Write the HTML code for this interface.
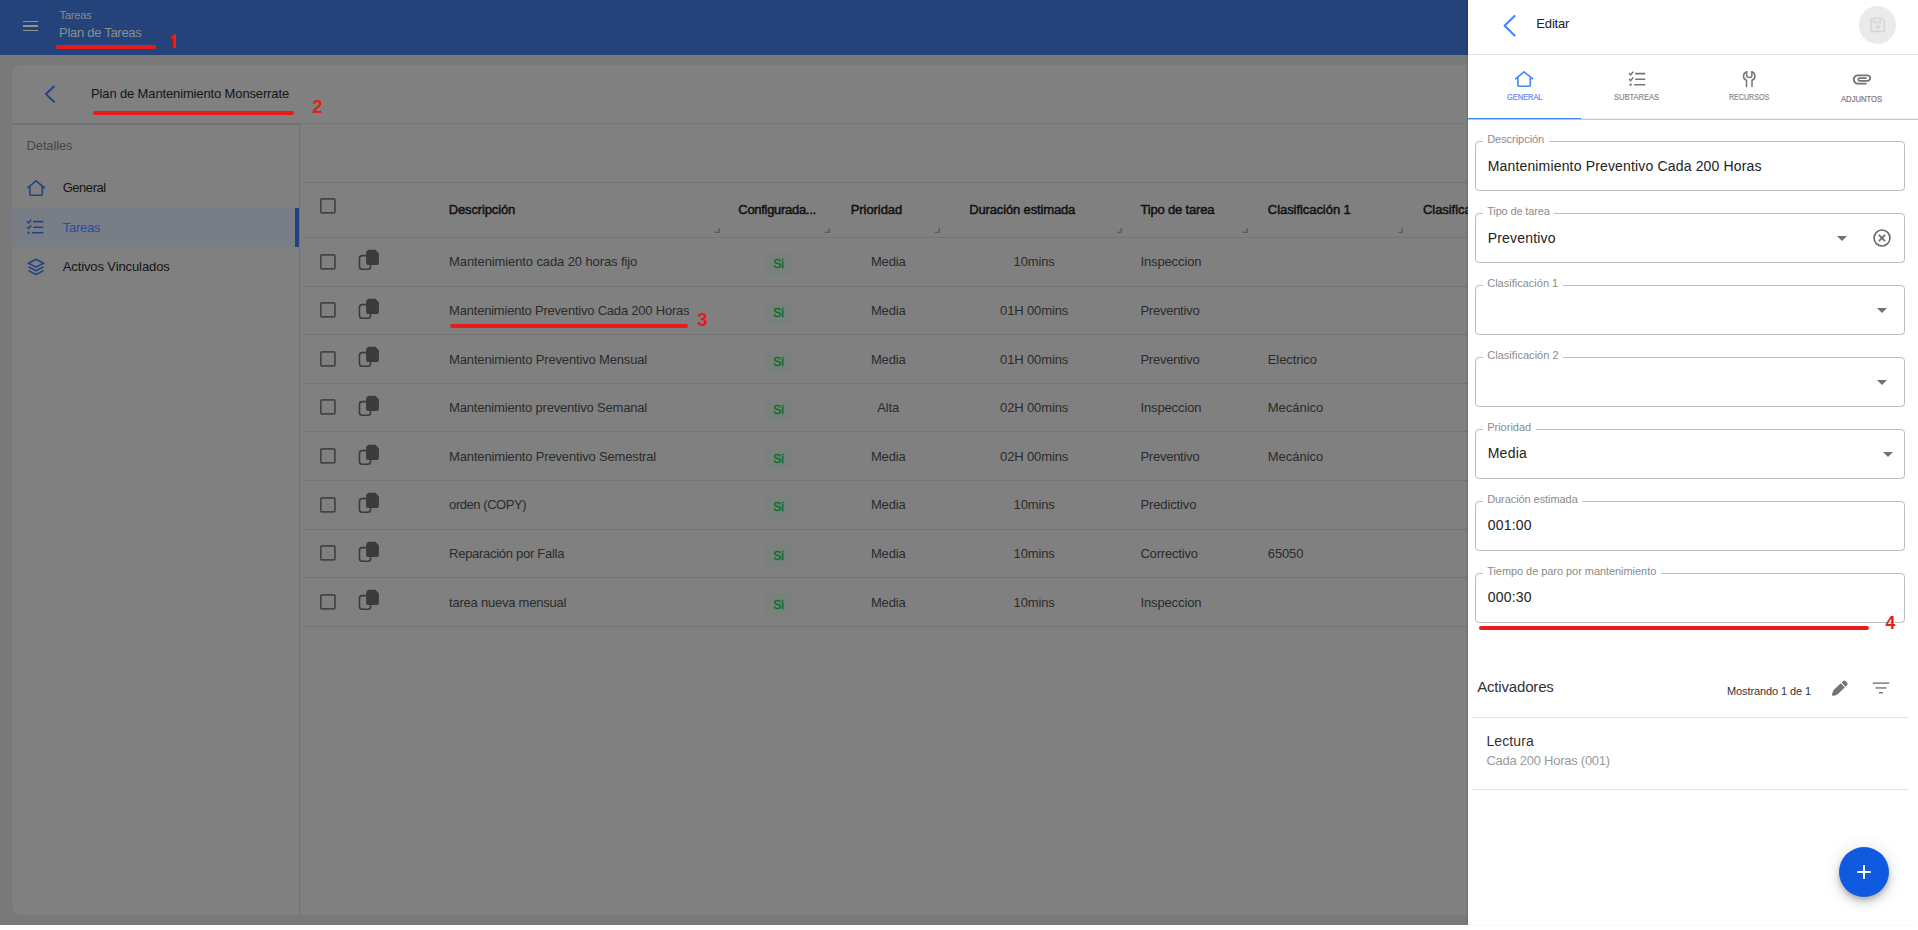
<!DOCTYPE html>
<html lang="es"><head><meta charset="utf-8"><title>Plan de Tareas</title>
<style>
html,body{margin:0;padding:0;background:#fff}
body{width:1918px;height:930px;position:relative;overflow:hidden;font-family:'Liberation Sans',sans-serif}
.a{position:absolute}
.t{position:absolute;white-space:nowrap;display:block}
svg{position:absolute;overflow:visible}
</style></head><body>
<div class="a" style="left:0px;top:0px;width:1468px;height:925px;background:#797979;"></div>
<div class="a" style="left:0px;top:0px;width:1468px;height:55px;background:#24437b;"></div>
<div class="a" style="left:22.7px;top:20.55px;width:15.7px;height:1.5px;background:#939393;"></div>
<div class="a" style="left:22.7px;top:25.25px;width:15.7px;height:1.5px;background:#939393;"></div>
<div class="a" style="left:22.7px;top:29.95px;width:15.7px;height:1.5px;background:#939393;"></div>
<span class="t" id="t1" style="top:8.00px;font-size:11px;line-height:14px;color:#8d8d8d;letter-spacing:-0.169px;left:59.50px;">Tareas</span>
<span class="t" id="t2" style="top:24.00px;font-size:13px;line-height:17px;color:#8d8d8d;letter-spacing:-0.285px;left:59.00px;">Plan de Tareas</span>
<div class="a" style="left:55.8px;top:45px;width:100px;height:4px;background:#e61c1c;border-radius:2px"></div>
<span class="t" id="t3" style="top:31.00px;font-size:17px;line-height:21px;color:#e61c1c;font-weight:700;left:169.20px;font-family:'IPAGothic','Liberation Sans',sans-serif;-webkit-text-stroke:0.8px #e61c1c;">1</span>
<div class="a" style="left:12px;top:65px;width:1500px;height:850px;background:#808080;border-radius:9px 0 0 9px"></div>
<div class="a" style="left:12px;top:123px;width:1456px;height:1px;background:#777;"></div>
<div class="a" style="left:12px;top:123px;width:288px;height:2px;background:#727272;"></div>
<svg style="left:40px;top:80px" width="24" height="28" viewBox="0 0 24 28"><path d="M14.4 6 L6 14.1 L14.4 22.2" fill="none" stroke="#234380" stroke-width="2"/></svg>
<span class="t" id="t4" style="top:85.00px;font-size:13px;line-height:17px;color:#151515;letter-spacing:-0.136px;left:91.00px;">Plan de Mantenimiento Monserrate</span>
<div class="a" style="left:93px;top:111px;width:201px;height:4px;background:#e61c1c;border-radius:2px"></div>
<span class="t" id="t5" style="top:95.00px;font-size:18.5px;line-height:23px;color:#e61c1c;font-weight:700;left:312.30px;">2</span>
<div class="a" style="left:299px;top:124px;width:1px;height:791px;background:#737373;"></div>
<span class="t" id="t6" style="top:137.00px;font-size:13px;line-height:17px;color:#474747;letter-spacing:-0.121px;left:26.50px;">Detalles</span>
<div class="a" style="left:12px;top:208px;width:287px;height:38.6px;background:#787d86;"></div>
<div class="a" style="left:295px;top:208px;width:4px;height:38.6px;background:#234380;"></div>
<svg style="left:24px;top:176px" width="24" height="24" viewBox="0 0 24 24"><path d="M3.600 11.800 L12.100 4.800 L20.600 11.800 M5.900 10.200 V18.200 Q5.900 19.200 6.900 19.200 H17.300 Q18.300 19.200 18.300 18.200 V10.200" fill="none" stroke="#234380" stroke-width="1.600" stroke-linejoin="round" stroke-linecap="round"/></svg>
<span class="t" id="t7" style="top:179.00px;font-size:13px;line-height:17px;color:#151515;letter-spacing:-0.466px;left:62.70px;">General</span>
<svg style="left:24px;top:216px" width="24" height="24" viewBox="0 0 24 24" fill="none" stroke="#234380" stroke-width="1.600"><path d="M9.100 5.600 H19.200 M9.100 11.200 H19.200 M8.200 16.800 H19.200"/><path d="M3 5.400 L4.600 7 L7.300 3.700 M3 11 L4.600 12.600 L7.300 9.300" stroke-width="1.500"/><rect x="3.500" y="15.700" width="2.100" height="2.100" fill="#234380" stroke="none"/></svg>
<span class="t" id="t8" style="top:219.00px;font-size:13px;line-height:17px;color:#2a4c98;letter-spacing:-0.255px;left:62.70px;">Tareas</span>
<svg style="left:24px;top:255px" width="24" height="24" viewBox="0 0 24 24" fill="none" stroke="#234380" stroke-width="1.600" stroke-linejoin="round"><path d="M12 4.3 L19.6 8.2 L12 12.1 L4.4 8.2 Z"/><path d="M4.4 11.9 L12 15.8 L19.6 11.9"/><path d="M4.4 15.6 L12 19.5 L19.6 15.6"/></svg>
<span class="t" id="t9" style="top:258.00px;font-size:13px;line-height:17px;color:#151515;letter-spacing:-0.105px;left:62.70px;">Activos Vinculados</span>
<div class="a" style="left:304px;top:182px;width:1164px;height:1px;background:#747474;"></div>
<div class="a" style="left:304px;top:237px;width:1164px;height:1px;background:#747474;"></div>
<div class="a" style="left:304px;top:286px;width:1164px;height:1px;background:#747474;"></div>
<div class="a" style="left:304px;top:334px;width:1164px;height:1px;background:#747474;"></div>
<div class="a" style="left:304px;top:383px;width:1164px;height:1px;background:#747474;"></div>
<div class="a" style="left:304px;top:431px;width:1164px;height:1px;background:#747474;"></div>
<div class="a" style="left:304px;top:480px;width:1164px;height:1px;background:#747474;"></div>
<div class="a" style="left:304px;top:529px;width:1164px;height:1px;background:#747474;"></div>
<div class="a" style="left:304px;top:577px;width:1164px;height:1px;background:#747474;"></div>
<div class="a" style="left:304px;top:626px;width:1164px;height:1px;background:#747474;"></div>
<svg style="left:319.7px;top:198px" width="16" height="16" viewBox="0 0 16 16"><rect x="0.85" y="0.85" width="14.1" height="14.1" rx="1.2" fill="none" stroke="#444" stroke-width="1.700"/></svg>
<span class="t" id="t10" style="top:201.00px;font-size:13px;line-height:17px;color:#101010;letter-spacing:-0.129px;left:448.70px;-webkit-text-stroke:0.45px #101010;">Descripción</span>
<span class="t" id="t11" style="top:201.00px;font-size:13px;line-height:17px;color:#101010;letter-spacing:-0.298px;left:738.30px;-webkit-text-stroke:0.45px #101010;">Configurada...</span>
<span class="t" id="t12" style="top:201.00px;font-size:13px;line-height:17px;color:#101010;letter-spacing:-0.059px;left:850.70px;-webkit-text-stroke:0.45px #101010;">Prioridad</span>
<span class="t" id="t13" style="top:201.00px;font-size:13px;line-height:17px;color:#101010;letter-spacing:-0.141px;left:969.20px;-webkit-text-stroke:0.45px #101010;">Duración estimada</span>
<span class="t" id="t14" style="top:201.00px;font-size:13px;line-height:17px;color:#101010;letter-spacing:-0.164px;left:1140.40px;-webkit-text-stroke:0.45px #101010;">Tipo de tarea</span>
<span class="t" id="t15" style="top:201.00px;font-size:13px;line-height:17px;color:#101010;letter-spacing:-0.055px;left:1267.80px;-webkit-text-stroke:0.45px #101010;">Clasificación 1</span>
<div class="a" style="left:1400px;top:190px;width:68px;height:40px;overflow:hidden">
<span class="t" id="t16" style="top:11.00px;font-size:13px;line-height:17px;color:#101010;letter-spacing:-0.055px;left:23.00px;-webkit-text-stroke:0.45px #101010;">Clasificación 2</span>
</div>
<svg style="left:714.8px;top:228.3px" width="6" height="6" viewBox="0 0 6 6"><path d="M4.2 0 V4.2 H0" fill="none" stroke="#515151" stroke-width="1.1"/></svg>
<svg style="left:824.9px;top:228.3px" width="6" height="6" viewBox="0 0 6 6"><path d="M4.2 0 V4.2 H0" fill="none" stroke="#515151" stroke-width="1.1"/></svg>
<svg style="left:934.5px;top:228.3px" width="6" height="6" viewBox="0 0 6 6"><path d="M4.2 0 V4.2 H0" fill="none" stroke="#515151" stroke-width="1.1"/></svg>
<svg style="left:1116.5px;top:228.3px" width="6" height="6" viewBox="0 0 6 6"><path d="M4.2 0 V4.2 H0" fill="none" stroke="#515151" stroke-width="1.1"/></svg>
<svg style="left:1243.3px;top:228.3px" width="6" height="6" viewBox="0 0 6 6"><path d="M4.2 0 V4.2 H0" fill="none" stroke="#515151" stroke-width="1.1"/></svg>
<svg style="left:1398.4px;top:228.3px" width="6" height="6" viewBox="0 0 6 6"><path d="M4.2 0 V4.2 H0" fill="none" stroke="#515151" stroke-width="1.1"/></svg>
<svg style="left:319.6px;top:253.5px" width="16" height="16" viewBox="0 0 16 16"><rect x="0.85" y="0.85" width="14.1" height="14.1" rx="1.2" fill="none" stroke="#444" stroke-width="1.700"/></svg>
<svg style="left:358.2px;top:249.15px" width="22" height="22" viewBox="0 0 22 22"><path d="M8.2 6.6 H4.2 Q1.45 6.6 1.45 9.3 V17.500 Q1.45 20.2 4.2 20.2 H9.9 Q12.55 20.2 12.55 17.500 V16" fill="none" stroke="#3b3b3b" stroke-width="1.600"/><path d="M11.6 0.7 H17.4 L20.9 4.2 V13.500 Q20.9 16.1 18.3 16.1 H10.7 Q8.1 16.1 8.1 13.500 V4.2 Q8.1 0.7 11.6 0.7 Z" fill="#3b3b3b"/></svg>
<span class="t" id="t17" style="top:253.00px;font-size:13px;line-height:17px;color:#2b2b2b;letter-spacing:-0.110px;left:449.10px;">Mantenimiento cada 20 horas fijo</span>
<div class="a" style="left:765.3px;top:253.05px;width:26.8px;height:21.9px;background:#78817b;border-radius:4px"></div>
<span class="t" id="t18" style="top:256.00px;font-size:12px;line-height:16px;color:#046c27;left:778.50px;transform:translateX(-50%);-webkit-text-stroke:0.3px #046c27;">Si</span>
<span class="t" id="t19" style="top:253.00px;font-size:13px;line-height:17px;color:#2b2b2b;letter-spacing:-0.184px;left:888.20px;transform:translateX(-50%);">Media</span>
<span class="t" id="t20" style="top:253.00px;font-size:13px;line-height:17px;color:#2b2b2b;letter-spacing:-0.151px;left:1034.10px;transform:translateX(-50%);">10mins</span>
<span class="t" id="t21" style="top:253.00px;font-size:13px;line-height:17px;color:#2b2b2b;letter-spacing:-0.116px;left:1140.40px;">Inspeccion</span>
<svg style="left:319.6px;top:302.1px" width="16" height="16" viewBox="0 0 16 16"><rect x="0.85" y="0.85" width="14.1" height="14.1" rx="1.2" fill="none" stroke="#444" stroke-width="1.700"/></svg>
<svg style="left:358.2px;top:297.75px" width="22" height="22" viewBox="0 0 22 22"><path d="M8.2 6.6 H4.2 Q1.45 6.6 1.45 9.3 V17.500 Q1.45 20.2 4.2 20.2 H9.9 Q12.55 20.2 12.55 17.500 V16" fill="none" stroke="#3b3b3b" stroke-width="1.600"/><path d="M11.6 0.7 H17.4 L20.9 4.2 V13.500 Q20.9 16.1 18.3 16.1 H10.7 Q8.1 16.1 8.1 13.500 V4.2 Q8.1 0.7 11.6 0.7 Z" fill="#3b3b3b"/></svg>
<span class="t" id="t22" style="top:302.00px;font-size:13px;line-height:17px;color:#2b2b2b;letter-spacing:-0.213px;left:449.10px;">Mantenimiento Preventivo Cada 200 Horas</span>
<div class="a" style="left:765.3px;top:301.65px;width:26.8px;height:21.9px;background:#78817b;border-radius:4px"></div>
<span class="t" id="t23" style="top:305.00px;font-size:12px;line-height:16px;color:#046c27;left:778.50px;transform:translateX(-50%);-webkit-text-stroke:0.3px #046c27;">Si</span>
<span class="t" id="t24" style="top:302.00px;font-size:13px;line-height:17px;color:#2b2b2b;letter-spacing:-0.184px;left:888.20px;transform:translateX(-50%);">Media</span>
<span class="t" id="t25" style="top:302.00px;font-size:13px;line-height:17px;color:#2b2b2b;letter-spacing:-0.138px;left:1034.10px;transform:translateX(-50%);">01H 00mins</span>
<span class="t" id="t26" style="top:302.00px;font-size:13px;line-height:17px;color:#2b2b2b;letter-spacing:-0.244px;left:1140.40px;">Preventivo</span>
<svg style="left:319.6px;top:350.7px" width="16" height="16" viewBox="0 0 16 16"><rect x="0.85" y="0.85" width="14.1" height="14.1" rx="1.2" fill="none" stroke="#444" stroke-width="1.700"/></svg>
<svg style="left:358.2px;top:346.35px" width="22" height="22" viewBox="0 0 22 22"><path d="M8.2 6.6 H4.2 Q1.45 6.6 1.45 9.3 V17.500 Q1.45 20.2 4.2 20.2 H9.9 Q12.55 20.2 12.55 17.500 V16" fill="none" stroke="#3b3b3b" stroke-width="1.600"/><path d="M11.6 0.7 H17.4 L20.9 4.2 V13.500 Q20.9 16.1 18.3 16.1 H10.7 Q8.1 16.1 8.1 13.500 V4.2 Q8.1 0.7 11.6 0.7 Z" fill="#3b3b3b"/></svg>
<span class="t" id="t27" style="top:351.00px;font-size:13px;line-height:17px;color:#2b2b2b;letter-spacing:-0.158px;left:449.10px;">Mantenimiento Preventivo Mensual</span>
<div class="a" style="left:765.3px;top:350.25px;width:26.8px;height:21.9px;background:#78817b;border-radius:4px"></div>
<span class="t" id="t28" style="top:354.00px;font-size:12px;line-height:16px;color:#046c27;left:778.50px;transform:translateX(-50%);-webkit-text-stroke:0.3px #046c27;">Si</span>
<span class="t" id="t29" style="top:351.00px;font-size:13px;line-height:17px;color:#2b2b2b;letter-spacing:-0.184px;left:888.20px;transform:translateX(-50%);">Media</span>
<span class="t" id="t30" style="top:351.00px;font-size:13px;line-height:17px;color:#2b2b2b;letter-spacing:-0.138px;left:1034.10px;transform:translateX(-50%);">01H 00mins</span>
<span class="t" id="t31" style="top:351.00px;font-size:13px;line-height:17px;color:#2b2b2b;letter-spacing:-0.244px;left:1140.40px;">Preventivo</span>
<span class="t" id="t32" style="top:351.00px;font-size:13px;line-height:17px;color:#2b2b2b;letter-spacing:-0.095px;left:1267.80px;">Electrico</span>
<svg style="left:319.6px;top:399.3px" width="16" height="16" viewBox="0 0 16 16"><rect x="0.85" y="0.85" width="14.1" height="14.1" rx="1.2" fill="none" stroke="#444" stroke-width="1.700"/></svg>
<svg style="left:358.2px;top:394.95px" width="22" height="22" viewBox="0 0 22 22"><path d="M8.2 6.6 H4.2 Q1.45 6.6 1.45 9.3 V17.500 Q1.45 20.2 4.2 20.2 H9.9 Q12.55 20.2 12.55 17.500 V16" fill="none" stroke="#3b3b3b" stroke-width="1.600"/><path d="M11.6 0.7 H17.4 L20.9 4.2 V13.500 Q20.9 16.1 18.3 16.1 H10.7 Q8.1 16.1 8.1 13.500 V4.2 Q8.1 0.7 11.6 0.7 Z" fill="#3b3b3b"/></svg>
<span class="t" id="t33" style="top:399.00px;font-size:13px;line-height:17px;color:#2b2b2b;letter-spacing:-0.181px;left:449.10px;">Mantenimiento preventivo Semanal</span>
<div class="a" style="left:765.3px;top:398.85px;width:26.8px;height:21.9px;background:#78817b;border-radius:4px"></div>
<span class="t" id="t34" style="top:402.00px;font-size:12px;line-height:16px;color:#046c27;left:778.50px;transform:translateX(-50%);-webkit-text-stroke:0.3px #046c27;">Si</span>
<span class="t" id="t35" style="top:399.00px;font-size:13px;line-height:17px;color:#2b2b2b;letter-spacing:-0.102px;left:888.20px;transform:translateX(-50%);">Alta</span>
<span class="t" id="t36" style="top:399.00px;font-size:13px;line-height:17px;color:#2b2b2b;letter-spacing:-0.138px;left:1034.10px;transform:translateX(-50%);">02H 00mins</span>
<span class="t" id="t37" style="top:399.00px;font-size:13px;line-height:17px;color:#2b2b2b;letter-spacing:-0.116px;left:1140.40px;">Inspeccion</span>
<span class="t" id="t38" style="top:399.00px;font-size:13px;line-height:17px;color:#2b2b2b;letter-spacing:-0.018px;left:1267.80px;">Mecánico</span>
<svg style="left:319.6px;top:447.9px" width="16" height="16" viewBox="0 0 16 16"><rect x="0.85" y="0.85" width="14.1" height="14.1" rx="1.2" fill="none" stroke="#444" stroke-width="1.700"/></svg>
<svg style="left:358.2px;top:443.55px" width="22" height="22" viewBox="0 0 22 22"><path d="M8.2 6.6 H4.2 Q1.45 6.6 1.45 9.3 V17.500 Q1.45 20.2 4.2 20.2 H9.9 Q12.55 20.2 12.55 17.500 V16" fill="none" stroke="#3b3b3b" stroke-width="1.600"/><path d="M11.6 0.7 H17.4 L20.9 4.2 V13.500 Q20.9 16.1 18.3 16.1 H10.7 Q8.1 16.1 8.1 13.500 V4.2 Q8.1 0.7 11.6 0.7 Z" fill="#3b3b3b"/></svg>
<span class="t" id="t39" style="top:448.00px;font-size:13px;line-height:17px;color:#2b2b2b;letter-spacing:-0.160px;left:449.10px;">Mantenimiento Preventivo Semestral</span>
<div class="a" style="left:765.3px;top:447.45px;width:26.8px;height:21.9px;background:#78817b;border-radius:4px"></div>
<span class="t" id="t40" style="top:451.00px;font-size:12px;line-height:16px;color:#046c27;left:778.50px;transform:translateX(-50%);-webkit-text-stroke:0.3px #046c27;">Si</span>
<span class="t" id="t41" style="top:448.00px;font-size:13px;line-height:17px;color:#2b2b2b;letter-spacing:-0.184px;left:888.20px;transform:translateX(-50%);">Media</span>
<span class="t" id="t42" style="top:448.00px;font-size:13px;line-height:17px;color:#2b2b2b;letter-spacing:-0.138px;left:1034.10px;transform:translateX(-50%);">02H 00mins</span>
<span class="t" id="t43" style="top:448.00px;font-size:13px;line-height:17px;color:#2b2b2b;letter-spacing:-0.244px;left:1140.40px;">Preventivo</span>
<span class="t" id="t44" style="top:448.00px;font-size:13px;line-height:17px;color:#2b2b2b;letter-spacing:-0.018px;left:1267.80px;">Mecánico</span>
<svg style="left:319.6px;top:496.5px" width="16" height="16" viewBox="0 0 16 16"><rect x="0.85" y="0.85" width="14.1" height="14.1" rx="1.2" fill="none" stroke="#444" stroke-width="1.700"/></svg>
<svg style="left:358.2px;top:492.15px" width="22" height="22" viewBox="0 0 22 22"><path d="M8.2 6.6 H4.2 Q1.45 6.6 1.45 9.3 V17.500 Q1.45 20.2 4.2 20.2 H9.9 Q12.55 20.2 12.55 17.500 V16" fill="none" stroke="#3b3b3b" stroke-width="1.600"/><path d="M11.6 0.7 H17.4 L20.9 4.2 V13.500 Q20.9 16.1 18.3 16.1 H10.7 Q8.1 16.1 8.1 13.500 V4.2 Q8.1 0.7 11.6 0.7 Z" fill="#3b3b3b"/></svg>
<span class="t" id="t45" style="top:496.00px;font-size:13px;line-height:17px;color:#2b2b2b;letter-spacing:-0.448px;left:449.10px;">orden (COPY)</span>
<div class="a" style="left:765.3px;top:496.05px;width:26.8px;height:21.9px;background:#78817b;border-radius:4px"></div>
<span class="t" id="t46" style="top:499.00px;font-size:12px;line-height:16px;color:#046c27;left:778.50px;transform:translateX(-50%);-webkit-text-stroke:0.3px #046c27;">Si</span>
<span class="t" id="t47" style="top:496.00px;font-size:13px;line-height:17px;color:#2b2b2b;letter-spacing:-0.184px;left:888.20px;transform:translateX(-50%);">Media</span>
<span class="t" id="t48" style="top:496.00px;font-size:13px;line-height:17px;color:#2b2b2b;letter-spacing:-0.151px;left:1034.10px;transform:translateX(-50%);">10mins</span>
<span class="t" id="t49" style="top:496.00px;font-size:13px;line-height:17px;color:#2b2b2b;letter-spacing:-0.108px;left:1140.40px;">Predictivo</span>
<svg style="left:319.6px;top:545.1px" width="16" height="16" viewBox="0 0 16 16"><rect x="0.85" y="0.85" width="14.1" height="14.1" rx="1.2" fill="none" stroke="#444" stroke-width="1.700"/></svg>
<svg style="left:358.2px;top:540.75px" width="22" height="22" viewBox="0 0 22 22"><path d="M8.2 6.6 H4.2 Q1.45 6.6 1.45 9.3 V17.500 Q1.45 20.2 4.2 20.2 H9.9 Q12.55 20.2 12.55 17.500 V16" fill="none" stroke="#3b3b3b" stroke-width="1.600"/><path d="M11.6 0.7 H17.4 L20.9 4.2 V13.500 Q20.9 16.1 18.3 16.1 H10.7 Q8.1 16.1 8.1 13.500 V4.2 Q8.1 0.7 11.6 0.7 Z" fill="#3b3b3b"/></svg>
<span class="t" id="t50" style="top:545.00px;font-size:13px;line-height:17px;color:#2b2b2b;letter-spacing:-0.284px;left:449.10px;">Reparación por Falla</span>
<div class="a" style="left:765.3px;top:544.65px;width:26.8px;height:21.9px;background:#78817b;border-radius:4px"></div>
<span class="t" id="t51" style="top:548.00px;font-size:12px;line-height:16px;color:#046c27;left:778.50px;transform:translateX(-50%);-webkit-text-stroke:0.3px #046c27;">Si</span>
<span class="t" id="t52" style="top:545.00px;font-size:13px;line-height:17px;color:#2b2b2b;letter-spacing:-0.184px;left:888.20px;transform:translateX(-50%);">Media</span>
<span class="t" id="t53" style="top:545.00px;font-size:13px;line-height:17px;color:#2b2b2b;letter-spacing:-0.151px;left:1034.10px;transform:translateX(-50%);">10mins</span>
<span class="t" id="t54" style="top:545.00px;font-size:13px;line-height:17px;color:#2b2b2b;letter-spacing:-0.175px;left:1140.40px;">Correctivo</span>
<span class="t" id="t55" style="top:545.00px;font-size:13px;line-height:17px;color:#2b2b2b;letter-spacing:-0.131px;left:1267.80px;">65050</span>
<svg style="left:319.6px;top:593.7px" width="16" height="16" viewBox="0 0 16 16"><rect x="0.85" y="0.85" width="14.1" height="14.1" rx="1.2" fill="none" stroke="#444" stroke-width="1.700"/></svg>
<svg style="left:358.2px;top:589.35px" width="22" height="22" viewBox="0 0 22 22"><path d="M8.2 6.6 H4.2 Q1.45 6.6 1.45 9.3 V17.500 Q1.45 20.2 4.2 20.2 H9.9 Q12.55 20.2 12.55 17.500 V16" fill="none" stroke="#3b3b3b" stroke-width="1.600"/><path d="M11.6 0.7 H17.4 L20.9 4.2 V13.500 Q20.9 16.1 18.3 16.1 H10.7 Q8.1 16.1 8.1 13.500 V4.2 Q8.1 0.7 11.6 0.7 Z" fill="#3b3b3b"/></svg>
<span class="t" id="t56" style="top:594.00px;font-size:13px;line-height:17px;color:#2b2b2b;letter-spacing:-0.233px;left:449.10px;">tarea nueva mensual</span>
<div class="a" style="left:765.3px;top:593.25px;width:26.8px;height:21.9px;background:#78817b;border-radius:4px"></div>
<span class="t" id="t57" style="top:597.00px;font-size:12px;line-height:16px;color:#046c27;left:778.50px;transform:translateX(-50%);-webkit-text-stroke:0.3px #046c27;">Si</span>
<span class="t" id="t58" style="top:594.00px;font-size:13px;line-height:17px;color:#2b2b2b;letter-spacing:-0.184px;left:888.20px;transform:translateX(-50%);">Media</span>
<span class="t" id="t59" style="top:594.00px;font-size:13px;line-height:17px;color:#2b2b2b;letter-spacing:-0.151px;left:1034.10px;transform:translateX(-50%);">10mins</span>
<span class="t" id="t60" style="top:594.00px;font-size:13px;line-height:17px;color:#2b2b2b;letter-spacing:-0.116px;left:1140.40px;">Inspeccion</span>
<div class="a" style="left:450px;top:323.9px;width:238px;height:4px;background:#e61c1c;border-radius:2px"></div>
<span class="t" id="t61" style="top:308.00px;font-size:18.5px;line-height:23px;color:#e61c1c;font-weight:700;left:697.30px;">3</span>
<div class="a" style="left:1468px;top:0px;width:450px;height:925px;background:#fff;border-radius:0 0 6px 6px;box-shadow:-1px 0 1.5px rgba(0,0,0,.13)"></div>
<div class="a" style="left:1468px;top:54px;width:450px;height:1px;background:#e3e3e3;"></div>
<svg style="left:1498px;top:12px" width="24" height="28" viewBox="0 0 24 28"><path d="M16.6 4 L6.6 13.8 L16.6 23.6" fill="none" stroke="#4285f4" stroke-width="2.1" stroke-linecap="round" stroke-linejoin="round"/></svg>
<span class="t" id="t62" style="top:15.00px;font-size:13px;line-height:17px;color:#222;letter-spacing:-0.161px;left:1536.30px;">Editar</span>
<div class="a" style="left:1858.8px;top:6.2px;width:37.4px;height:37.4px;background:#eaeaea;border-radius:50%"></div>
<svg style="left:1867.7px;top:15.1px" width="19.6" height="19.6" viewBox="0 0 24 24"><path d="M17 3H5a2 2 0 0 0-2 2v14a2 2 0 0 0 2 2h14a2 2 0 0 0 2-2V7l-4-4zm2 16H5V5h11.17L19 7.830V19z" fill="#d6d6d6"/><circle cx="12" cy="14.6" r="2.4" fill="#d6d6d6"/><path d="M7 5 V9.300 H15 V5" fill="none" stroke="#d6d6d6" stroke-width="1.8"/></svg>
<div class="a" style="left:1468px;top:118px;width:450px;height:1px;background:#efefef;"></div>
<div class="a" style="left:1468px;top:119px;width:450px;height:1px;background:#c6c6c6;"></div>
<div class="a" style="left:1468px;top:117.8px;width:112.8px;height:1.7px;background:#4285f4;"></div>
<svg style="left:1512px;top:67px" width="24" height="24" viewBox="0 0 24 24"><path d="M3.600 11.800 L12.100 4.800 L20.600 11.800 M5.900 10.200 V18.200 Q5.900 19.200 6.900 19.200 H17.300 Q18.300 19.200 18.300 18.200 V10.200" fill="none" stroke="#4285f4" stroke-width="1.600" stroke-linejoin="round" stroke-linecap="round"/></svg>
<span class="t" id="t63" style="top:91.00px;font-size:8.6px;line-height:12px;color:#6485f2;transform:scaleX(0.8642);transform-origin:0 50%;left:1506.60px;-webkit-text-stroke:0.2px #6485f2;">GENERAL</span>
<svg style="left:1626.3px;top:67.7px" width="24" height="24" viewBox="0 0 24 24" fill="none" stroke="#757575" stroke-width="1.6"><path d="M9.100 5.600 H19.200 M9.100 11.200 H19.200 M8.200 16.800 H19.200"/><path d="M3 5.400 L4.600 7 L7.300 3.700 M3 11 L4.600 12.600 L7.300 9.300" stroke-width="1.500"/><rect x="3.500" y="15.700" width="2.100" height="2.100" fill="#757575" stroke="none"/></svg>
<span class="t" id="t64" style="top:91.00px;font-size:8.6px;line-height:12px;color:#8a8a8a;transform:scaleX(0.8751);transform-origin:0 50%;left:1614.30px;-webkit-text-stroke:0.2px #8a8a8a;">SUBTAREAS</span>
<svg style="left:1737px;top:67px" width="24" height="24" viewBox="0 0 24 24" fill="none" stroke="#757575" stroke-width="1.500" stroke-linecap="round" stroke-linejoin="round"><path d="M9.6 4.8 V8.2 Q9.6 10.500 12.25 10.500 Q14.9 10.500 14.9 8.2 V4.8"/><path d="M9.6 4.8 C5.500 6.600 5.500 11.800 9.500 13.200 V19.500"/><path d="M14.9 4.8 C19 6.600 19 11.800 15 13.200 V19.500"/></svg>
<span class="t" id="t65" style="top:91.00px;font-size:8.6px;line-height:12px;color:#8a8a8a;transform:scaleX(0.8251);transform-origin:0 50%;left:1729.40px;-webkit-text-stroke:0.2px #8a8a8a;">RECURSOS</span>
<svg style="left:1851.1px;top:68.4px" width="22" height="22" viewBox="0 0 24 24"><path d="M2 12.5C2 9.46 4.46 7 7.5 7H18c2.21 0 4 1.79 4 4s-1.79 4-4 4H9.5a2.5 2.5 0 0 1 0-5H17v2H9.41c-.55 0-.55 1 0 1H18c1.1 0 2-.9 2-2s-.9-2-2-2H7.500C5.570 9 4 10.570 4 12.500S5.570 16 7.500 16H17v2H7.500C4.460 18 2 15.540 2 12.500z" fill="#757575"/></svg>
<span class="t" id="t66" style="top:93.00px;font-size:8.6px;line-height:12px;color:#7c7c7c;transform:scaleX(0.8923);transform-origin:0 50%;left:1841.20px;-webkit-text-stroke:0.2px #7c7c7c;">ADJUNTOS</span>
<div class="a" style="left:1475px;top:141px;width:428px;height:48px;border:1px solid #bdbdbd;border-radius:4px"></div>
<div class="a" style="left:1483px;top:140px;width:65.6px;height:3px;background:#fff;"></div>
<span class="t" id="t67" style="top:132.00px;font-size:11px;line-height:14px;color:#8b8b8b;letter-spacing:-0.043px;left:1487.20px;">Descripción</span>
<span class="t" id="t68" style="top:157.00px;font-size:14px;line-height:18px;color:#222;letter-spacing:0.161px;left:1487.70px;">Mantenimiento Preventivo Cada 200 Horas</span>
<div class="a" style="left:1475px;top:213px;width:428px;height:48px;border:1px solid #bdbdbd;border-radius:4px"></div>
<div class="a" style="left:1483px;top:212px;width:71.1px;height:3px;background:#fff;"></div>
<span class="t" id="t69" style="top:204.00px;font-size:11px;line-height:14px;color:#8b8b8b;letter-spacing:-0.148px;left:1487.20px;">Tipo de tarea</span>
<span class="t" id="t70" style="top:229.00px;font-size:14px;line-height:18px;color:#222;letter-spacing:0.184px;left:1487.70px;">Preventivo</span>
<div class="a" style="left:1475px;top:285px;width:428px;height:48px;border:1px solid #bdbdbd;border-radius:4px"></div>
<div class="a" style="left:1483px;top:284px;width:79.6px;height:3px;background:#fff;"></div>
<span class="t" id="t71" style="top:276.00px;font-size:11px;line-height:14px;color:#8b8b8b;letter-spacing:0.005px;left:1487.20px;">Clasificación 1</span>
<div class="a" style="left:1475px;top:357px;width:428px;height:48px;border:1px solid #bdbdbd;border-radius:4px"></div>
<div class="a" style="left:1483px;top:356px;width:80.1px;height:3px;background:#fff;"></div>
<span class="t" id="t72" style="top:348.00px;font-size:11px;line-height:14px;color:#8b8b8b;letter-spacing:0.038px;left:1487.20px;">Clasificación 2</span>
<div class="a" style="left:1475px;top:429px;width:428px;height:48px;border:1px solid #bdbdbd;border-radius:4px"></div>
<div class="a" style="left:1483px;top:428px;width:52.6px;height:3px;background:#fff;"></div>
<span class="t" id="t73" style="top:420.00px;font-size:11px;line-height:14px;color:#8b8b8b;letter-spacing:-0.003px;left:1487.20px;">Prioridad</span>
<span class="t" id="t74" style="top:444.00px;font-size:14px;line-height:18px;color:#222;letter-spacing:0.272px;left:1487.70px;">Media</span>
<div class="a" style="left:1475px;top:501px;width:428px;height:48px;border:1px solid #bdbdbd;border-radius:4px"></div>
<div class="a" style="left:1483px;top:500px;width:99.1px;height:3px;background:#fff;"></div>
<span class="t" id="t75" style="top:492.00px;font-size:11px;line-height:14px;color:#8b8b8b;letter-spacing:-0.072px;left:1487.20px;">Duración estimada</span>
<span class="t" id="t76" style="top:516.00px;font-size:14px;line-height:18px;color:#222;letter-spacing:0.195px;left:1487.70px;">001:00</span>
<div class="a" style="left:1475px;top:573px;width:428px;height:48px;border:1px solid #bdbdbd;border-radius:4px"></div>
<div class="a" style="left:1483px;top:572px;width:177.6px;height:3px;background:#fff;"></div>
<span class="t" id="t77" style="top:564.00px;font-size:11px;line-height:14px;color:#8b8b8b;letter-spacing:-0.056px;left:1487.20px;">Tiempo de paro por mantenimiento</span>
<span class="t" id="t78" style="top:588.00px;font-size:14px;line-height:18px;color:#222;letter-spacing:0.195px;left:1487.70px;">000:30</span>
<svg style="left:1836.8px;top:235.8px" width="10" height="5" viewBox="0 0 10 5"><path d="M0 0 H10 L5 5 Z" fill="#727272"/></svg>
<svg style="left:1876.6px;top:308px" width="10" height="5" viewBox="0 0 10 5"><path d="M0 0 H10 L5 5 Z" fill="#727272"/></svg>
<svg style="left:1876.6px;top:380px" width="10" height="5" viewBox="0 0 10 5"><path d="M0 0 H10 L5 5 Z" fill="#727272"/></svg>
<svg style="left:1883px;top:451.9px" width="10" height="5" viewBox="0 0 10 5"><path d="M0 0 H10 L5 5 Z" fill="#727272"/></svg>
<svg style="left:1871.5px;top:227.8px" width="20" height="20" viewBox="0 0 20 20" fill="none" stroke="#686868" stroke-width="1.600"><circle cx="10" cy="10" r="7.95"/><path d="M6.9 6.9 L13.1 13.1 M13.1 6.9 L6.9 13.1" stroke-width="1.700"/></svg>
<div class="a" style="left:1478.6px;top:625.5px;width:390.2px;height:4px;background:#e61c1c;border-radius:2px"></div>
<span class="t" id="t79" style="top:612.00px;font-size:17.5px;line-height:22px;color:#e61c1c;font-weight:700;left:1885.60px;">4</span>
<span class="t" id="t80" style="top:677.00px;font-size:15px;line-height:19px;color:#333;letter-spacing:-0.170px;left:1477.20px;">Activadores</span>
<span class="t" id="t81" style="top:684.00px;font-size:11px;line-height:14px;color:#333;letter-spacing:-0.101px;left:1727.00px;">Mostrando 1 de 1</span>
<svg style="left:1826px;top:674px" width="28" height="28" viewBox="0 0 28 28"><g transform="translate(6.2 21.4) rotate(-43.500)" fill="#747474"><path d="M0 0.400 L0.700 -1.100 L4.800 -2.900 H14.600 V2.900 H4.800 L1.300 1.700 Z"/><path d="M15.700 -2.900 H17.600 Q19.700 -2.900 19.700 -0.800 V0.800 Q19.700 2.900 17.600 2.900 H15.700 Z"/></g></svg>
<svg style="left:1870px;top:678px" width="24" height="20" viewBox="0 0 24 20" fill="#808080"><rect x="2.8" y="4.400" width="16.500" height="1.500"/><rect x="5.600" y="9.200" width="10.900" height="1.500"/><rect x="9" y="14" width="4" height="1.500"/></svg>
<div class="a" style="left:1472.3px;top:717px;width:435.4px;height:1px;background:#e2e2e2;"></div>
<span class="t" id="t82" style="top:732.00px;font-size:14px;line-height:18px;color:#333;letter-spacing:0.128px;left:1486.40px;">Lectura</span>
<span class="t" id="t83" style="top:752.00px;font-size:13px;line-height:17px;color:#9a9a9a;letter-spacing:-0.257px;left:1486.40px;">Cada 200 Horas (001)</span>
<div class="a" style="left:1472.3px;top:789px;width:435.4px;height:1px;background:#e2e2e2;"></div>
<div class="a" style="left:1839px;top:846.7px;width:50px;height:50px;background:#105adf;border-radius:50%;box-shadow:0 3px 5px -1px rgba(0,0,0,.2),0 6px 10px rgba(0,0,0,.14),0 1px 18px rgba(0,0,0,.12)"></div>
<div class="a" style="left:1857px;top:871px;width:14px;height:2px;background:#fff;border-radius:1px"></div>
<div class="a" style="left:1863px;top:865px;width:2px;height:14px;background:#fff;border-radius:1px"></div>
</body></html>
